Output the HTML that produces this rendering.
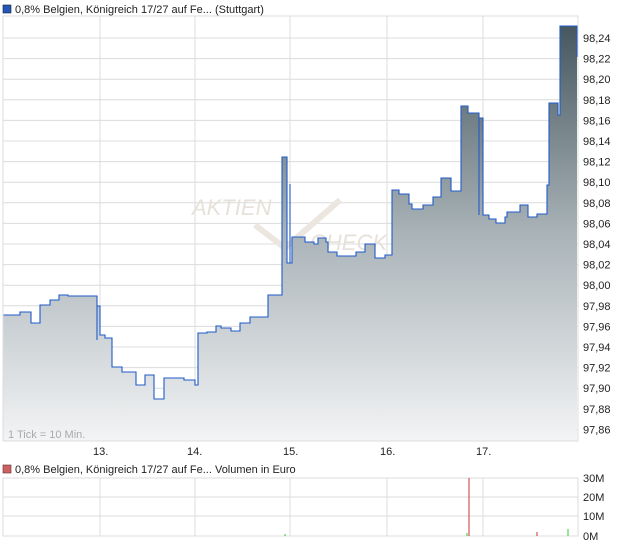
<!DOCTYPE html>
<html><head><meta charset="utf-8"><style>
body{margin:0;background:#fff;width:620px;height:546px;overflow:hidden;font-family:"Liberation Sans",sans-serif}
</style></head><body>
<svg width="620" height="546" xmlns="http://www.w3.org/2000/svg" font-family="Liberation Sans, sans-serif">
<defs><linearGradient id="g" x1="0" y1="26" x2="0" y2="441" gradientUnits="userSpaceOnUse">
<stop offset="0" stop-color="#46575f"/><stop offset="0.5" stop-color="#a9b3b8"/><stop offset="1" stop-color="#f3f4f5"/></linearGradient></defs>
<rect x="3" y="5" width="8" height="8" fill="#2456b8" stroke="#123" stroke-width="0.6"/>
<text x="15" y="13" font-size="11" fill="#222">0,8% Belgien, Königreich 17/27 auf Fe... (Stuttgart)</text>
<g stroke="#dcdcdc" stroke-width="1">
<line x1="3" y1="38" x2="578" y2="38"/><line x1="3" y1="58.6" x2="578" y2="58.6"/><line x1="3" y1="79.2" x2="578" y2="79.2"/><line x1="3" y1="99.8" x2="578" y2="99.8"/><line x1="3" y1="120.4" x2="578" y2="120.4"/><line x1="3" y1="141" x2="578" y2="141"/><line x1="3" y1="161.6" x2="578" y2="161.6"/><line x1="3" y1="182.2" x2="578" y2="182.2"/><line x1="3" y1="202.8" x2="578" y2="202.8"/><line x1="3" y1="223.4" x2="578" y2="223.4"/><line x1="3" y1="244" x2="578" y2="244"/><line x1="3" y1="264.6" x2="578" y2="264.6"/><line x1="3" y1="285.2" x2="578" y2="285.2"/><line x1="3" y1="305.8" x2="578" y2="305.8"/><line x1="3" y1="326.4" x2="578" y2="326.4"/><line x1="3" y1="347" x2="578" y2="347"/><line x1="3" y1="367.6" x2="578" y2="367.6"/><line x1="3" y1="388.2" x2="578" y2="388.2"/><line x1="3" y1="408.8" x2="578" y2="408.8"/><line x1="3" y1="429.4" x2="578" y2="429.4"/>
<line x1="100" y1="16" x2="100" y2="441"/><line x1="195" y1="16" x2="195" y2="441"/><line x1="290" y1="16" x2="290" y2="441"/><line x1="387" y1="16" x2="387" y2="441"/><line x1="483" y1="16" x2="483" y2="441"/>
</g>
<text x="192" y="215" font-size="22" font-style="italic" fill="#e6e1da">AKTIEN</text>
<text x="310" y="250" font-size="22" font-style="italic" fill="#e6e1da">CHECK</text>
<path d="M255 225 L285 248 L340 200" fill="none" stroke="#ebe6df" stroke-width="6"/>
<path d="M3 315 H20 V312 H31 V323 H40 V305 H50 V300 H59 V295 H68 V296 H97 V340 V306 H100 V335 H105 V338 H112 V367 H122 V372 H136 V385 H145 V375 H154 V399 H164 V378 H184 V380 H195 V385 H198 V333 H207 V332 H216 V326 H221 V328 H231 V331 H240 V323 H250 V317 H268 V295 H282 V157 H287 V263 H290 V184 V263 H292 V237 H305 V242 H314 V244 H318 V238 H326 V242 H328 V252 H337 V256 H356 V252 H365 V244 H375 V258 H385 V255 H392 V190 H399 V194 H409 V204 H412 V209 H423 V205 H433 V197 H441 V178 H451 V191 H461 V106 H468 V113 H479 V215 V118 H483 V215 H489 V219 H496 V223 H505 V217 H507 V212 H520 V205 H528 V217 H537 V214 H547 V185 H549 V103 H558 V115 H560 V26 H577 V441 H3 Z" fill="url(#g)"/>
<path d="M3 315 H20 V312 H31 V323 H40 V305 H50 V300 H59 V295 H68 V296 H97 V340 V306 H100 V335 H105 V338 H112 V367 H122 V372 H136 V385 H145 V375 H154 V399 H164 V378 H184 V380 H195 V385 H198 V333 H207 V332 H216 V326 H221 V328 H231 V331 H240 V323 H250 V317 H268 V295 H282 V157 H287 V263 H290 V184 V263 H292 V237 H305 V242 H314 V244 H318 V238 H326 V242 H328 V252 H337 V256 H356 V252 H365 V244 H375 V258 H385 V255 H392 V190 H399 V194 H409 V204 H412 V209 H423 V205 H433 V197 H441 V178 H451 V191 H461 V106 H468 V113 H479 V215 V118 H483 V215 H489 V219 H496 V223 H505 V217 H507 V212 H520 V205 H528 V217 H537 V214 H547 V185 H549 V103 H558 V115 H560 V26 H577 V57" fill="none" stroke="#1f5bc8" stroke-width="1.1"/>
<rect x="3" y="16" width="575" height="425" fill="none" stroke="#dcdcdc"/>
<text x="8" y="438" font-size="11" fill="#aaa">1 Tick = 10 Min.</text>
<g font-size="11" fill="#222">
<text x="583" y="42">98,24</text><text x="583" y="62.6">98,22</text><text x="583" y="83.2">98,20</text><text x="583" y="103.8">98,18</text><text x="583" y="124.4">98,16</text><text x="583" y="145">98,14</text><text x="583" y="165.6">98,12</text><text x="583" y="186.2">98,10</text><text x="583" y="206.8">98,08</text><text x="583" y="227.4">98,06</text><text x="583" y="248">98,04</text><text x="583" y="268.6">98,02</text><text x="583" y="289.2">98,00</text><text x="583" y="309.8">97,98</text><text x="583" y="330.4">97,96</text><text x="583" y="351">97,94</text><text x="583" y="371.6">97,92</text><text x="583" y="392.2">97,90</text><text x="583" y="412.8">97,88</text><text x="583" y="433.4">97,86</text>
<text x="93" y="455">13.</text><text x="187" y="455">14.</text><text x="283" y="455">15.</text><text x="380" y="455">16.</text><text x="476" y="455">17.</text>
</g>
<rect x="3" y="465" width="8" height="8" fill="#d06060" stroke="#533" stroke-width="0.6"/>
<text x="15" y="473" font-size="11" fill="#222">0,8% Belgien, Königreich 17/27 auf Fe... Volumen in Euro</text>
<g stroke="#dcdcdc">
<rect x="3" y="478" width="575" height="58" fill="none"/>
<line x1="3" y1="497" x2="578" y2="497"/><line x1="3" y1="516" x2="578" y2="516"/>
<line x1="100" y1="478" x2="100" y2="536"/><line x1="195" y1="478" x2="195" y2="536"/><line x1="290" y1="478" x2="290" y2="536"/><line x1="387" y1="478" x2="387" y2="536"/><line x1="483" y1="478" x2="483" y2="536"/>
</g>
<line x1="469" y1="478" x2="469" y2="536" stroke="#c33"/>
<line x1="537" y1="532" x2="537" y2="536" stroke="#c33"/>
<line x1="285" y1="534" x2="285" y2="536" stroke="#3c3"/>
<line x1="467" y1="533" x2="467" y2="536" stroke="#3c3"/>
<line x1="568" y1="529" x2="568" y2="536" stroke="#3c3"/>
<g font-size="11" fill="#222"><text x="583" y="482">30M</text><text x="583" y="501">20M</text><text x="583" y="520">10M</text><text x="583" y="540">0M</text></g>
</svg>
</body></html>
